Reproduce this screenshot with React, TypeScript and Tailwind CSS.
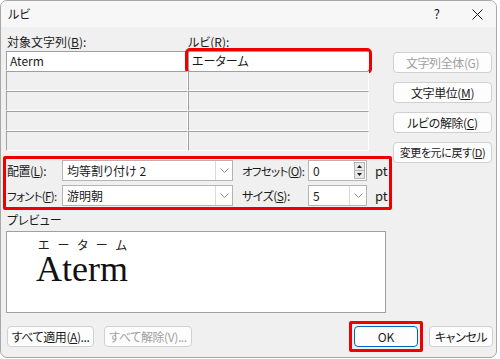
import type { ReactNode } from "react";

const Chevron = () => (
  <svg width="9" height="5" viewBox="0 0 9 5">
    <path d="M0.5 0.5 L4.5 4.5 L8.5 0.5" fill="none" stroke="#8c8c8c" strokeWidth="1" />
  </svg>
);

const Btn = ({
  children,
  disabled,
  className = "",
}: {
  children: ReactNode;
  disabled?: boolean;
  className?: string;
}) => (
  <div
    className={`flex h-[21px] shrink-0 items-center justify-center whitespace-nowrap rounded-[4px] border border-[#d0d0d0] bg-[#fdfdfd] tracking-[-0.4px] ${
      disabled ? "text-[#a0a0a0]" : "text-[#1b1b1b]"
    } ${className}`}
  >
    {children}
  </div>
);

const Cell = ({ text, white, className = "" }: { text?: string; white?: boolean; className?: string }) => (
  <div
    className={`h-[20px] border-t border-l border-[#a0a0a0] border-r-white border-b-white border-r border-b pl-[3px] leading-[18px] ${
      white ? "bg-white" : "bg-[#f0f0f0]"
    } ${className}`}
  >
    {text}
  </div>
);

const Combo = ({ value, width }: { value: string; width: string }) => (
  <div className={`flex h-[21px] shrink-0 border border-[#b4b4b4] bg-white ${width}`}>
    <div className="flex-1 whitespace-nowrap pl-[4px] leading-[19px]">{value}</div>
    <div className="flex w-[17px] items-center justify-center border-l border-[#dadada]">
      <Chevron />
    </div>
  </div>
);

export default function App() {
  return (
    <div className="h-[359px] w-[500px] bg-white font-['Noto_Sans_CJK_JP',sans-serif] text-[12px] text-[#1b1b1b] [font-feature-settings:'palt']">
      <div className="flex h-[358px] w-[497px] flex-col overflow-hidden rounded-[7px] border border-[#a8a8a8] bg-[#f0f0f0]">
        {/* title bar */}
        <div className="flex h-[26px] shrink-0 items-center bg-[#f7f7f7] pl-[7px]">
          <span className="leading-[14px]">ルビ</span>
          <span className="ml-auto mr-[32px] text-[13px]">?</span>
          <svg width="11" height="11" viewBox="0 0 11 11" className="mr-[13px]">
            <path d="M0.5 0.5 L10.5 10.5 M10.5 0.5 L0.5 10.5" stroke="#1b1b1b" strokeWidth="1" />
          </svg>
        </div>

        <div className="flex flex-1 flex-col pl-[2px]">
          <div className="flex">
            {/* left column */}
            <div className="flex w-[389px] shrink-0 flex-col">
              <div className="mt-[8px] flex h-[14px] whitespace-nowrap pl-[4px] leading-[14px]">
                <span className="w-[181px]">
                  対象文字列(<u>B</u>):
                </span>
                <span>
                  ルビ(<u>R</u>):
                </span>
              </div>
              <div className="ml-[3px] mt-[2px] grid w-[363px] grid-cols-[182px_181px]">
                <Cell text="Aterm" white />
                <Cell text="エーターム" white className="rounded-[2px] outline outline-[3px] outline-[#ee0000]" />
                <Cell />
                <Cell />
                <Cell />
                <Cell />
                <Cell />
                <Cell />
                <Cell />
                <Cell />
              </div>

              {/* highlighted settings */}
              <div className="mt-[5px] flex h-[54px] flex-col gap-[4px] whitespace-nowrap rounded-[2px] border-[3px] border-[#ee0000] pl-[1px] pt-[1px]">
                <div className="flex items-center">
                  <span className="w-[55px] shrink-0 leading-[14px] tracking-[-0.5px]">
                    配置(<u>L</u>):
                  </span>
                  <Combo value="均等割り付け 2" width="w-[171px]" />
                  <span className="ml-[9px] w-[66px] shrink-0 text-[11.5px] leading-[14px] tracking-[-0.7px]">
                    オフセット(<u>O</u>):
                  </span>
                  <div className="flex h-[21px] w-[59px] shrink-0 border border-[#b4b4b4] bg-white">
                    <div className="flex-1 pl-[4px] leading-[19px]">0</div>
                    <div className="my-[1px] mr-[1px] flex w-[11px] flex-col border border-[#b4b4b4] bg-[#e8e8e8]">
                      <div className="flex flex-1 items-center justify-center border-b border-[#b4b4b4]">
                        <svg width="5" height="3" viewBox="0 0 5 3">
                          <path d="M0 3 L2.5 0 L5 3 Z" fill="#1b1b1b" />
                        </svg>
                      </div>
                      <div className="flex flex-1 items-center justify-center">
                        <svg width="5" height="3" viewBox="0 0 5 3">
                          <path d="M0 0 L2.5 3 L5 0 Z" fill="#1b1b1b" />
                        </svg>
                      </div>
                    </div>
                  </div>
                  <span className="ml-[8px] text-[13px] leading-[14px]">pt</span>
                </div>
                <div className="flex items-center">
                  <span className="w-[55px] shrink-0 text-[11.5px] leading-[14px] tracking-[-0.7px]">
                    フォント(<u>F</u>):
                  </span>
                  <Combo value="游明朝" width="w-[171px]" />
                  <span className="ml-[9px] w-[66px] shrink-0 leading-[14px] tracking-[-0.5px]">
                    サイズ(<u>S</u>):
                  </span>
                  <Combo value="5" width="w-[59px]" />
                  <span className="ml-[8px] text-[13px] leading-[14px]">pt</span>
                </div>
              </div>

              <div className="mt-[3px] pl-[4px] leading-[14px]">プレビュー</div>
              <div className="ml-[3px] mt-[4px] h-[82px] w-[380px] border border-[#a0a0a0] bg-white">
                <div className="ml-[31px] mt-[7px] flex w-[89px] justify-between text-[12px] leading-[12px] text-[#222]">
                  <span>エ</span>
                  <span>ー</span>
                  <span>タ</span>
                  <span>ー</span>
                  <span>ム</span>
                </div>
                <div className="ml-[29px] font-['Liberation_Serif',serif] text-[36px] leading-none text-[#111]">
                  Aterm
                </div>
              </div>
            </div>

            {/* right buttons */}
            <div className="ml-[1px] mt-[25px] flex w-[99px] shrink-0 flex-col gap-[9px]">
              <Btn disabled>文字列全体(G)</Btn>
              <Btn>
                文字単位(<u>M</u>)
              </Btn>
              <Btn>
                ルビの解除(<u>C</u>)
              </Btn>
              <Btn className="text-[11px] tracking-[-0.3px]">
                変更を元に戻す(<u>D</u>)
              </Btn>
            </div>
          </div>

          {/* bottom row */}
          <div className="mt-[8px] flex items-center pl-[4px]">
            <Btn className="w-[87px]">
              すべて適用(<u>A</u>)...
            </Btn>
            <Btn disabled className="ml-[10px] w-[88px]">
              すべて解除(V)...
            </Btn>
            <div className="ml-auto rounded-[2px] border-[3px] border-[#ee0000] p-[2px]">
              <div className="flex h-[21px] w-[64px] items-center justify-center rounded-[4px] border border-[#0067c0] bg-[#fdfdfd]">
                OK
              </div>
            </div>
            <Btn className="ml-[6px] mr-[3px] w-[64px]">キャンセル</Btn>
          </div>
        </div>
      </div>
    </div>
  );
}
